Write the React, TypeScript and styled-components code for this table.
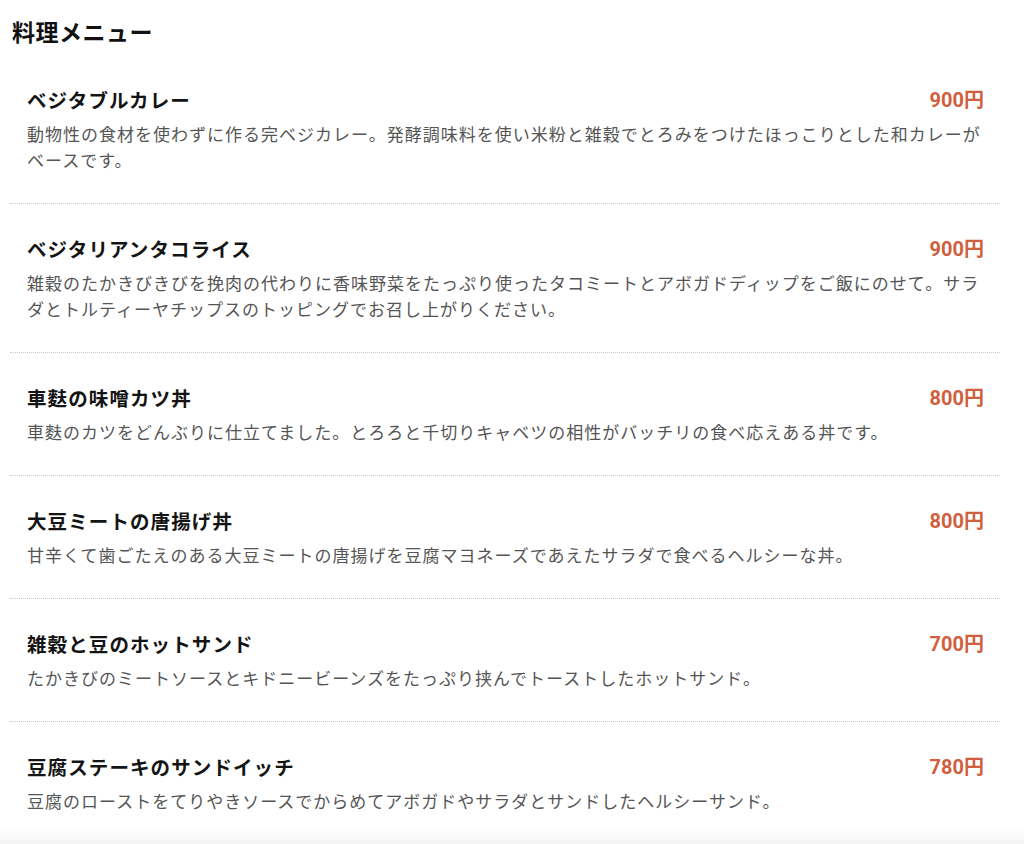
import React from "react";
import styled, { createGlobalStyle } from "styled-components";

const GlobalStyle = createGlobalStyle`
  html, body {
    margin: 0;
    padding: 0;
    background: #ffffff;
  }
  body {
    font-family: "Noto Sans CJK JP", "Noto Sans", sans-serif;
    color: #1a1a1a;
  }
`;

const Page = styled.main`
  padding: 16px 24px 0 10px;
`;

const Title = styled.h2`
  margin: 0 0 9px 2px;
  font-size: 23px;
  line-height: 30px;
  font-weight: 700;
  letter-spacing: 0.5px;
  color: #111;
`;

const List = styled.ul`
  list-style: none;
  margin: 0;
  padding: 0;
`;

const Item = styled.li`
  padding: 30px 16px 30px 17px;
  border-bottom: 1px dotted #c8c8c8;
  &:last-child {
    border-bottom: none;
  }
`;

const Head = styled.div`
  display: flex;
  align-items: center;
  justify-content: space-between;
  height: 30px;
  margin-bottom: 6px;
`;

const Name = styled.h3`
  margin: 0;
  font-size: 19.5px;
  line-height: 30px;
  font-weight: 700;
  letter-spacing: 1.1px;
  color: #141414;
`;

const Price = styled.span`
  font-family: Roboto, "Noto Sans CJK JP", sans-serif;
  font-size: 20px;
  line-height: 30px;
  font-weight: 700;
  color: #cf5f3e;
`;

const Desc = styled.p`
  margin: 0;
  font-size: 17px;
  line-height: 26px;
  letter-spacing: 1px;
  color: #555555;
`;

const BottomFade = styled.div`
  position: fixed;
  left: 0;
  right: 0;
  bottom: 0;
  height: 16px;
  background: linear-gradient(to bottom, rgba(244, 244, 244, 0), #f3f3f3);
  pointer-events: none;
`;

type MenuItem = { name: string; price: string; desc: string };

const items: MenuItem[] = [
  {
    name: "ベジタブルカレー",
    price: "900円",
    desc:
      "動物性の食材を使わずに作る完ベジカレー。発酵調味料を使い米粉と雑穀でとろみをつけたほっこりとした和カレーがベースです。",
  },
  {
    name: "ベジタリアンタコライス",
    price: "900円",
    desc:
      "雑穀のたかきびきびを挽肉の代わりに香味野菜をたっぷり使ったタコミートとアボガドディップをご飯にのせて。サラダとトルティーヤチップスのトッピングでお召し上がりください。",
  },
  {
    name: "車麩の味噌カツ丼",
    price: "800円",
    desc: "車麩のカツをどんぶりに仕立てました。とろろと千切りキャベツの相性がバッチリの食べ応えある丼です。",
  },
  {
    name: "大豆ミートの唐揚げ丼",
    price: "800円",
    desc: "甘辛くて歯ごたえのある大豆ミートの唐揚げを豆腐マヨネーズであえたサラダで食べるヘルシーな丼。",
  },
  {
    name: "雑穀と豆のホットサンド",
    price: "700円",
    desc: "たかきびのミートソースとキドニービーンズをたっぷり挟んでトーストしたホットサンド。",
  },
  {
    name: "豆腐ステーキのサンドイッチ",
    price: "780円",
    desc: "豆腐のローストをてりやきソースでからめてアボガドやサラダとサンドしたヘルシーサンド。",
  },
];

export default function App() {
  return (
    <>
      <GlobalStyle />
      <Page>
        <Title>料理メニュー</Title>
        <List>
          {items.map((it) => (
            <Item key={it.name}>
              <Head>
                <Name>{it.name}</Name>
                <Price>{it.price}</Price>
              </Head>
              <Desc>{it.desc}</Desc>
            </Item>
          ))}
        </List>
      </Page>
      <BottomFade />
    </>
  );
}
